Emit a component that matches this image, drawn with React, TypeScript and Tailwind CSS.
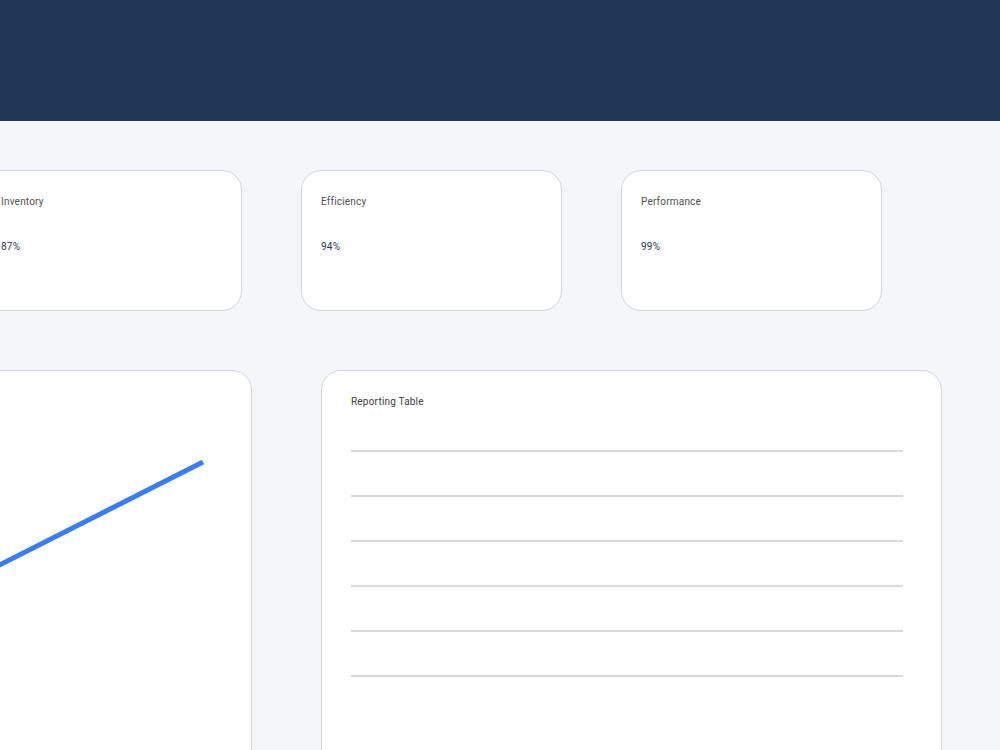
const stats = [
  { label: "Inventory", value: "87%" },
  { label: "Efficiency", value: "94%" },
  { label: "Performance", value: "99%" },
];

function StatCard({ label, value }: { label: string; value: string }) {
  return (
    <div className="h-[141px] w-[261px] shrink-0 rounded-[20px] border border-[#d4d6da] bg-white px-[19px] pt-[24px]">
      <div className="text-[10px] leading-[14px] tracking-[0.2px] text-[#505050]">{label}</div>
      <div className="mt-[31px] text-[10px] leading-[14px] tracking-[0.2px] text-[#2c3850]">{value}</div>
    </div>
  );
}

export default function App() {
  const rows = [0, 1, 2, 3, 4, 5];
  return (
    <div
      className="h-[750px] w-[1000px] overflow-hidden bg-[#f5f6fa]"
      style={{ fontFamily: "Roboto, 'Noto Sans', sans-serif" }}
    >
      <header className="h-[121px] bg-[#223858]" />
      <div className="ml-[-19px] pt-[49px]">
        <div className="flex gap-[59px]">
          {stats.map((s) => (
            <StatCard key={s.label} label={s.label} value={s.value} />
          ))}
        </div>
        <div className="mt-[59px] flex gap-[69px]">
          <div className="h-[420px] w-[271px] shrink-0 rounded-[20px] border border-[#d4d6da] bg-white">
            <svg width="270" height="300" className="block">
              <line x1="-20" y1="213" x2="221" y2="91" stroke="#3a7cf6" strokeWidth="5" />
            </svg>
          </div>
          <div className="h-[420px] w-[621px] shrink-0 rounded-[20px] border border-[#d4d6da] bg-white pl-[29px] pr-[38px] pt-[24px]">
            <div className="text-[10px] leading-[14px] tracking-[0.2px] text-[#3e3e3e]">Reporting Table</div>
            <div className="-mt-[2px]">
              {rows.map((r) => (
                <div key={r} className="h-[45px] border-b-2 border-[#d9d9d9]" />
              ))}
            </div>
          </div>
        </div>
      </div>
    </div>
  );
}
